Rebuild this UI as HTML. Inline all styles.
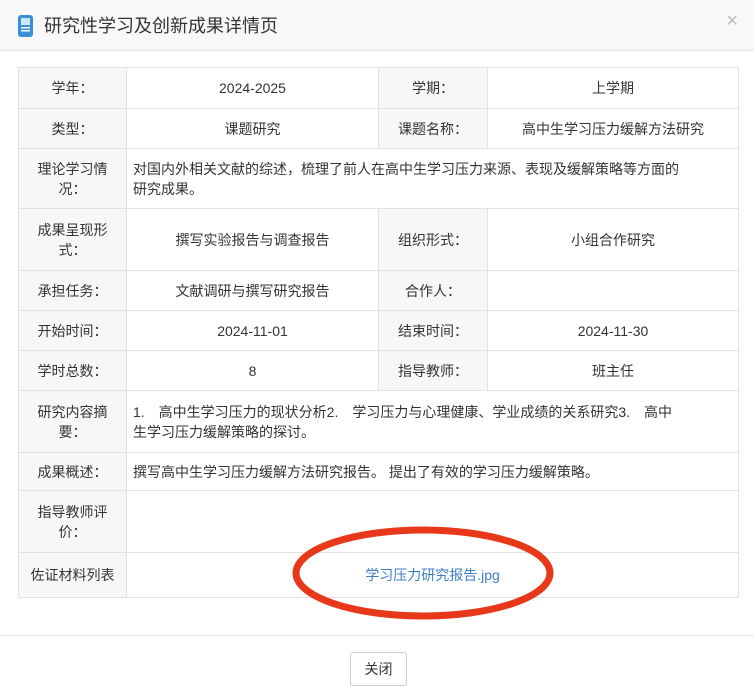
<!DOCTYPE html>
<html><head><meta charset="utf-8"><style>
body{margin:0;width:754px;height:699px;background:#fff;font-family:"Liberation Sans","Noto Sans CJK SC",sans-serif;font-size:14px;color:#333;position:relative;overflow:hidden}
.hd{position:absolute;left:0;top:0;width:754px;height:50px;background:#f8f8f8;border-bottom:1px solid #e5e5e5}
.hd .t{position:absolute;left:44px;top:12px;font-size:18px;color:#333}
.hd .x{position:absolute;right:16px;top:10px;font-size:20px;color:#bbb}
table{position:absolute;left:18px;top:67px;width:721px;border-collapse:collapse;table-layout:fixed}
td{border:1px solid #e2e2e2;padding:4px 6px;line-height:20px;box-sizing:border-box}
td.l{background:#f7f7f7;text-align:center;padding:4px 9px}
td.c{text-align:center}
.ft{position:absolute;left:0;top:635px;width:754px;border-top:1px solid #e5e5e5}
.btn{position:absolute;left:350px;top:652px;width:57px;height:34px;border:1px solid #ccc;border-radius:3px;box-sizing:border-box;text-align:center;line-height:32px;background:#fff}
a{color:#3d7fc7;text-decoration:none}
</style></head><body>
<div class="hd">
<svg style="position:absolute;left:18px;top:15px" width="15" height="22"><rect x="0" y="0" width="15" height="22" rx="3" fill="#3a8fd6"/><rect x="3" y="3" width="9" height="7" fill="#cfe6f8"/><rect x="3" y="12" width="9" height="1.5" fill="#fff"/><rect x="3" y="15" width="9" height="1.5" fill="#fff"/></svg>
<div class="t">研究性学习及创新成果详情页</div><div class="x">×</div></div>
<table>
<colgroup><col style="width:108px"><col style="width:252px"><col style="width:109px"><col></colgroup>
<tr style="height:41px"><td class="l">学年：</td><td class="c">2024-2025</td><td class="l">学期：</td><td class="c">上学期</td></tr>
<tr style="height:40px"><td class="l">类型：</td><td class="c">课题研究</td><td class="l">课题名称：</td><td class="c">高中生学习压力缓解方法研究</td></tr>
<tr style="height:60px"><td class="l">理论学习情况：</td><td colspan="3" style="padding-right:48px">对国内外相关文献的综述，梳理了前人在高中生学习压力来源、表现及缓解策略等方面的研究成果。</td></tr>
<tr style="height:62px"><td class="l">成果呈现形式：</td><td class="c">撰写实验报告与调查报告</td><td class="l">组织形式：</td><td class="c">小组合作研究</td></tr>
<tr style="height:40px"><td class="l">承担任务：</td><td class="c">文献调研与撰写研究报告</td><td class="l">合作人：</td><td></td></tr>
<tr style="height:40px"><td class="l">开始时间：</td><td class="c">2024-11-01</td><td class="l">结束时间：</td><td class="c">2024-11-30</td></tr>
<tr style="height:40px"><td class="l">学时总数：</td><td class="c">8</td><td class="l">指导教师：</td><td class="c">班主任</td></tr>
<tr style="height:62px"><td class="l">研究内容摘要：</td><td colspan="3" style="padding-right:58px">1.　高中生学习压力的现状分析2.　学习压力与心理健康、学业成绩的关系研究3.　高中生学习压力缓解策略的探讨。</td></tr>
<tr style="height:38px"><td class="l">成果概述：</td><td colspan="3">撰写高中生学习压力缓解方法研究报告。 提出了有效的学习压力缓解策略。</td></tr>
<tr style="height:62px"><td class="l">指导教师评价：</td><td colspan="3"></td></tr>
<tr style="height:45px"><td class="l">佐证材料列表</td><td colspan="3" class="c"><a>学习压力研究报告.jpg</a></td></tr>
</table>
<svg style="position:absolute;left:0;top:0" width="754" height="699"><ellipse cx="423" cy="573" rx="127" ry="43" fill="none" stroke="#e8381a" stroke-width="7"/></svg>
<div class="ft"></div>
<div class="btn">关闭</div>
</body></html>
